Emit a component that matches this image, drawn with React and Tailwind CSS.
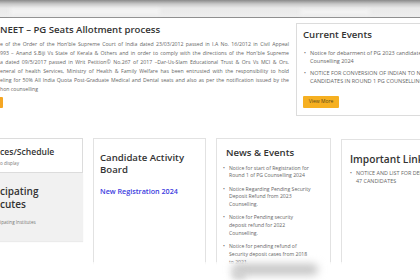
import React from 'react';

const introLines = [
  "e of the Order of the Hon'ble Supreme Court of India dated 23/03/2012 passed in I.A No. 16/2012 in Civil Appeal",
  '993 – Anand S.Biji Vs State of Kerala & Others and in order to comply with the directions of the Hon\'ble Supreme',
  'a dated 09/5/2017 passed in Writ Petition© No.267 of 2017 –Dar-Us-Slam Educational Trust & Ors Vs MCI & Ors.',
  'eneral of health Services, Ministry of Health & Family Welfare has been entrusted with the responsibility to hold',
  'eling for 50% All India Quota Post-Graduate Medical and Dental seats and also as per the notification issued by the',
];

const currentEvents = [
  ['Notice for debarment of PG 2023 candidates from', 'Counselling 2024'],
  ['NOTICE FOR CONVERSION OF INDIAN TO NRI', 'CANDIDATES IN ROUND 1 PG COUNSELLING'],
];

const news = [
  ['Notice for start of Registration for', 'Round 1 of PG Counselling 2024'],
  ['Notice Regarding Pending Security', 'Deposit Refund from 2023', 'Counselling.'],
  ['Notice for Pending security', 'deposit refund for 2022', 'Counselling.'],
  ['Notice for pending refund of', 'Security deposit cases from 2018', 'to 2021.'],
];

// one bullet item, lines kept as in the page
function Bullet({ lines, className = '' }) {
  return (
    <li className={`flex ${className}`}>
      <span className="w-[6px] shrink-0 text-[5px]">•</span>
      <span>
        {lines.map((l, i) => (
          <span key={i} className="block whitespace-nowrap">{l}</span>
        ))}
      </span>
    </li>
  );
}

export default function App() {
  return (
    <div
      className="relative w-[420px] h-[280px] overflow-hidden bg-white text-[#333]"
      style={{ fontFamily: '"Open Sans", "Liberation Sans", sans-serif' }}
    >
      {/* blurred top navigation */}
      <div className="relative h-[18px] border-b border-[#8f8f8f] bg-[linear-gradient(#8a8a8a_0px,#c9c9c9_4px,#e9e9e9_8px,#eeeeee_17px)]">
        <div className="absolute left-[10px] top-[9px] w-[150px] h-[5px] bg-[#f6f6f6] blur-[2px]" />
        <div className="absolute left-[300px] top-[10px] w-[70px] h-[4px] bg-[#f6f6f6] blur-[2px]" />
      </div>

      {/* top row */}
      <div className="flex mt-[5px]">
        <div className="w-[289px] shrink-0">
          <h1 className="mt-[1px] text-[9.6px] leading-[12px] font-semibold whitespace-nowrap">
            NEET – PG Seats Allotment process
          </h1>
          <div className="mt-[3.5px] text-[5.2px] leading-[9px] text-[#666]">
            {introLines.map((l, i) => (
              <p key={i} className="whitespace-nowrap text-justify [text-align-last:justify]">{l}</p>
            ))}
            <p>hon counselling</p>
          </div>
          <div className="mt-[3px] w-[3px] h-[11px] bg-[#f5a623] rounded-r-[1px]" />
        </div>

        <div className="ml-[7px] w-[150px] shrink-0 border border-[#dcdcdc] pt-[5px] pb-[6px] px-[6px]">
          <h2 className="text-[9.6px] leading-[12px] font-semibold">Current Events</h2>
          <ul className="mt-[7.5px] flex flex-col gap-[4.5px] text-[5.5px] leading-[8px] text-[#666]">
            {currentEvents.map((it, i) => (
              <Bullet key={i} lines={it} className="pl-[1px]" />
            ))}
          </ul>
          <button className="mt-[8px] w-[36px] h-[11.5px] bg-[#f6b021] text-[5px] text-[#5a4a1a] rounded-[1px]">
            View More
          </button>
        </div>
      </div>

      {/* lower cards */}
      <div className="flex items-start gap-[10px] mt-[22px]">
        <div className="w-[83px] shrink-0 flex flex-col">
          <div className="h-[35px] border border-l-0 border-[#dcdcdc] pt-[8px]">
            <div className="text-[8.6px] leading-[11px] font-semibold whitespace-nowrap">ces/Schedule</div>
            <div className="mt-[2px] text-[4.6px] leading-[7px] text-[#777]">o display</div>
          </div>
          <div className="h-[68px] bg-[#f1f1f1] shadow-[0_1px_1px_rgba(0,0,0,0.08)] pt-[12px]">
            <div className="text-[10px] leading-[13px] font-semibold">
              <div>cipating</div>
              <div>cutes</div>
            </div>
            <div className="mt-[8px] text-[4.6px] leading-[7px] text-[#777] whitespace-nowrap">ipating Institutes</div>
          </div>
        </div>

        <div className="w-[113px] h-[140px] shrink-0 border border-[#e2e2e2] px-[6px] pt-[12.5px]">
          <h3 className="text-[9.6px] leading-[12.3px] font-semibold">
            <div>Candidate Activity</div>
            <div>Board</div>
          </h3>
          <div className="mt-[11px] text-[7.2px] leading-[9px] font-semibold text-[#3c3ce0] whitespace-nowrap">
            New Registration 2024
          </div>
        </div>

        <div className="w-[115px] h-[140px] shrink-0 border border-[#e2e2e2] pl-[9px] pt-[8px]">
          <h3 className="text-[9.6px] leading-[12px] font-semibold whitespace-nowrap">News & Events</h3>
          <ul className="mt-[5.5px] flex flex-col gap-[5.5px] text-[5.1px] leading-[7.8px] text-[#666]">
            {news.map((it, i) => (
              <Bullet key={i} lines={it} className="-ml-[3px]" />
            ))}
          </ul>
        </div>

        <div className="w-[110px] h-[140px] shrink-0 mt-[1px] border border-[#e2e2e2] pl-[8px] pt-[13px]">
          <h3 className="text-[10.2px] leading-[13px] font-semibold whitespace-nowrap">Important Link</h3>
          <ul className="mt-[4px] text-[5.4px] leading-[7.8px] text-[#666]">
            <Bullet lines={['NOTICE AND LIST FOR DEBARRED', '47 CANDIDATES']} />
          </ul>
        </div>
      </div>

      {/* blurred footer area */}
      <div className="absolute left-0 bottom-0 w-full h-[18px] bg-[linear-gradient(rgba(255,255,255,0.6),#fff_3px)]">
        <div className="absolute left-[232px] top-[2px] w-[86px] h-[11px] rounded-full bg-[#c4c4c4] blur-[4px]" />
        <div className="absolute left-[232px] top-[9px] w-[14px] h-[8px] rounded-full bg-[#cfcfcf] blur-[3px]" />
      </div>
    </div>
  );
}
